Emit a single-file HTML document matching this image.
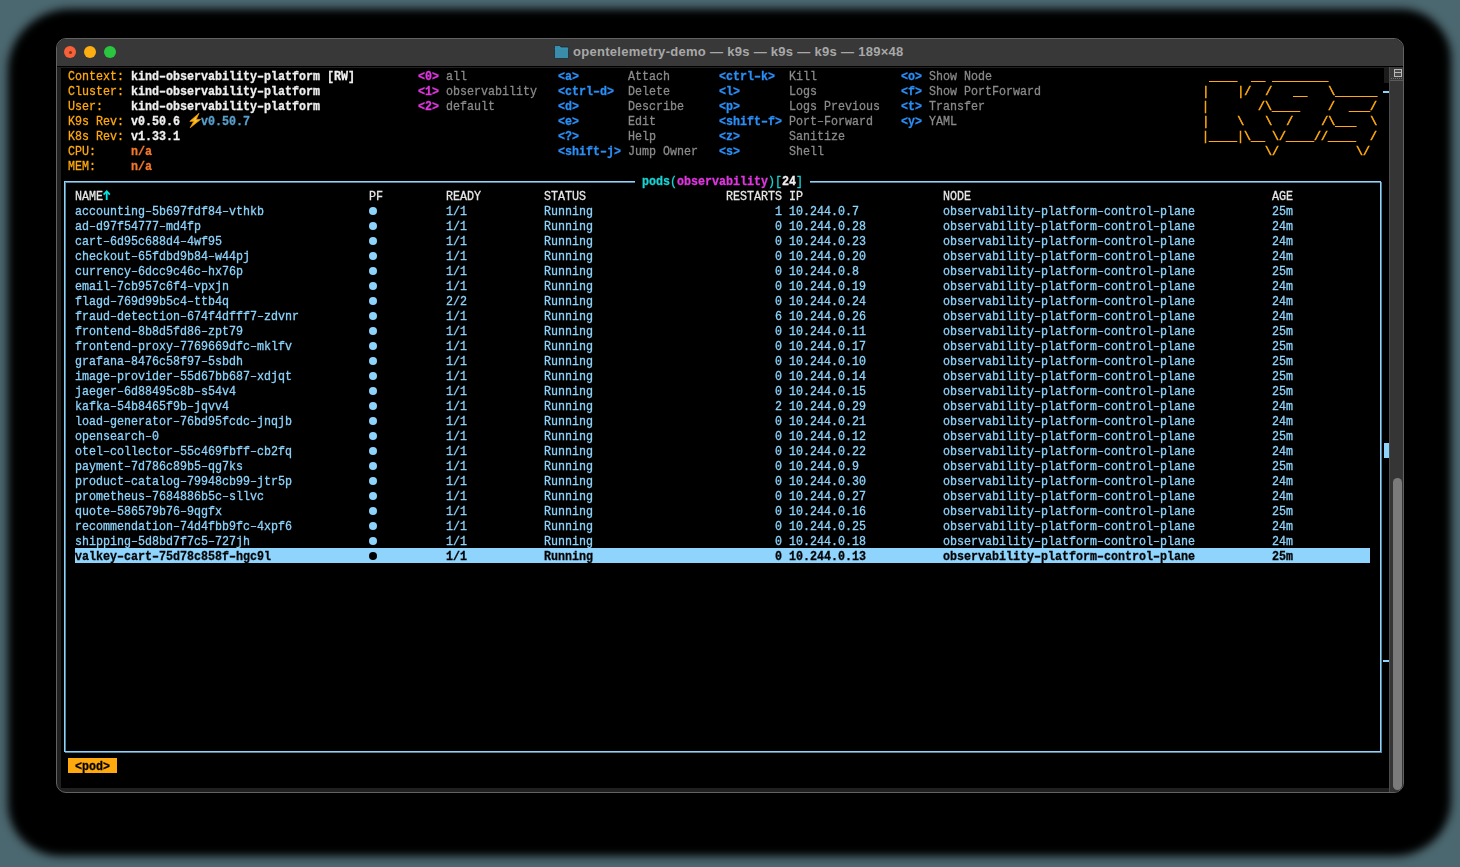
<!DOCTYPE html>
<html><head><meta charset="utf-8"><title>k9s</title>
<style>
html,body{margin:0;padding:0}
body{width:1460px;height:867px;overflow:hidden;background:#4b676f;position:relative}
#shadow{position:absolute;left:8px;top:9px;width:1443px;height:847px;background:#000;border-radius:62px 50px 56px 52px;filter:blur(4.5px)}
#win{position:absolute;left:56px;top:38px;width:1348px;height:755px;box-sizing:border-box;border:1px solid #626262;border-radius:10px;background:#202020;overflow:hidden}
#tb{position:absolute;left:0;top:0;width:1346px;height:27px;background:#383838;border-bottom:1px solid #000}
.tl{position:absolute;top:7px;width:12px;height:12px;border-radius:50%}
#ttl{position:absolute;left:516px;top:5px;font-family:"Liberation Sans",sans-serif;font-weight:bold;font-size:13px;letter-spacing:0.29px;line-height:16px;color:#a8a8a8;white-space:pre}
#term{position:absolute;left:4px;top:29px;width:1328px;height:720px;background:#000;overflow:hidden}
.r{position:absolute;left:0;top:0;height:15px;line-height:15px;white-space:pre;font-family:"Liberation Mono",monospace;font-size:13px;transform-origin:0 0;transform:scaleX(0.89729)}
.b{font-weight:bold}
.r span{-webkit-text-stroke:0.3px currentColor}
.r span.lg{-webkit-text-stroke:0.55px currentColor}
#sb{position:absolute;left:1332px;top:28px;width:14px;height:725px;background:#353535;border-left:1px solid #4c4c4c;box-sizing:border-box}
</style></head><body>
<div id="shadow"></div>
<div id="win">
<div id="tb">
 <div class="tl" style="left:7px;background:#f8603a"><div style="position:absolute;left:4.5px;top:4.5px;width:3px;height:3px;border-radius:50%;background:#7a3a10"></div></div>
 <div class="tl" style="left:27px;background:#fdae12"></div>
 <div class="tl" style="left:47px;background:#2ac63f"></div>
 <svg style="position:absolute;left:497px;top:6px" width="15" height="14" viewBox="0 0 15 14"><path d="M0.5 1.5 Q0.5 0.5 1.5 0.5 L5.5 0.5 L7 2 L13.5 2 Q14.5 2 14.5 3 L14.5 12.5 Q14.5 13.5 13.5 13.5 L1.5 13.5 Q0.5 13.5 0.5 12.5 Z" fill="#3b8cab" stroke="#1a1a1a" stroke-width="0.6"/><rect x="0.8" y="3.2" width="13.4" height="1" fill="#2f98b2"/></svg>
 <div id="ttl">opentelemetry-demo — k9s — k9s — k9s — 189×48</div>
</div>
<div id="term">

<div style="position:absolute;left:14px;top:480px;width:1295px;height:15px;background:#8ed4fc"></div>
<div style="position:absolute;left:7px;top:690px;width:49px;height:15px;background:#ffa90f"></div>
<div style="position:absolute;left:4px;top:114px;width:1317px;height:571px;border:1px solid #8dd3fb;opacity:0.6;box-sizing:border-box"></div>
<div style="position:absolute;left:3px;top:113px;width:1317px;height:571px;border:1px solid #8dd3fb;box-sizing:border-box"></div>
<div style="position:absolute;left:574px;top:110px;width:175px;height:8px;background:#000"></div>
<div class="r" style="top:1px"> <span style="color:#ffa90f">Context:</span> <span class="b" style="color:#f0f0f0">kind–observability–platform [RW]</span>         <span class="b" style="color:#e136e1">&lt;0&gt;</span> <span style="color:#8a8a8a">all</span>             <span class="b" style="color:#2a8ff7">&lt;a&gt;</span>       <span style="color:#8a8a8a">Attach</span>       <span class="b" style="color:#2a8ff7">&lt;ctrl–k&gt;</span>  <span style="color:#8a8a8a">Kill</span>            <span class="b" style="color:#2a8ff7">&lt;o&gt;</span> <span style="color:#8a8a8a">Show Node</span>                              <span class="lg" style="color:#ffa90f"> ____  __ ________       </span></div>
<div class="r" style="top:16px"> <span style="color:#ffa90f">Cluster:</span> <span class="b" style="color:#f0f0f0">kind–observability–platform</span>              <span class="b" style="color:#e136e1">&lt;1&gt;</span> <span style="color:#8a8a8a">observability</span>   <span class="b" style="color:#2a8ff7">&lt;ctrl–d&gt;</span>  <span style="color:#8a8a8a">Delete</span>       <span class="b" style="color:#2a8ff7">&lt;l&gt;</span>       <span style="color:#8a8a8a">Logs</span>            <span class="b" style="color:#2a8ff7">&lt;f&gt;</span> <span style="color:#8a8a8a">Show PortForward</span>                       <span class="lg" style="color:#ffa90f">|    |/  /   __   \______</span></div>
<div class="r" style="top:31px"> <span style="color:#ffa90f">User:</span>    <span class="b" style="color:#f0f0f0">kind–observability–platform</span>              <span class="b" style="color:#e136e1">&lt;2&gt;</span> <span style="color:#8a8a8a">default</span>         <span class="b" style="color:#2a8ff7">&lt;d&gt;</span>       <span style="color:#8a8a8a">Describe</span>     <span class="b" style="color:#2a8ff7">&lt;p&gt;</span>       <span style="color:#8a8a8a">Logs Previous</span>   <span class="b" style="color:#2a8ff7">&lt;t&gt;</span> <span style="color:#8a8a8a">Transfer</span>                               <span class="lg" style="color:#ffa90f">|       /\____    /  ___/</span></div>
<div class="r" style="top:46px"> <span style="color:#ffa90f">K9s Rev:</span> <span class="b" style="color:#f0f0f0">v0.50.6</span>   <span class="b" style="color:#58a0cc">v0.50.7</span>                                            <span class="b" style="color:#2a8ff7">&lt;e&gt;</span>       <span style="color:#8a8a8a">Edit</span>         <span class="b" style="color:#2a8ff7">&lt;shift–f&gt;</span> <span style="color:#8a8a8a">Port–Forward</span>    <span class="b" style="color:#2a8ff7">&lt;y&gt;</span> <span style="color:#8a8a8a">YAML</span>                                   <span class="lg" style="color:#ffa90f">|    \   \  /    /\___  \</span></div>
<div class="r" style="top:61px"> <span style="color:#ffa90f">K8s Rev:</span> <span class="b" style="color:#f0f0f0">v1.33.1</span>                                                      <span class="b" style="color:#2a8ff7">&lt;?&gt;</span>       <span style="color:#8a8a8a">Help</span>         <span class="b" style="color:#2a8ff7">&lt;z&gt;</span>       <span style="color:#8a8a8a">Sanitize</span>                                                   <span class="lg" style="color:#ffa90f">|____|\__ \/____//____  /</span></div>
<div class="r" style="top:76px"> <span style="color:#ffa90f">CPU:</span>     <span class="b" style="color:#f6782a">n/a</span>                                                          <span class="b" style="color:#2a8ff7">&lt;shift–j&gt;</span> <span style="color:#8a8a8a">Jump Owner</span>   <span class="b" style="color:#2a8ff7">&lt;s&gt;</span>       <span style="color:#8a8a8a">Shell</span>                                                      <span class="lg" style="color:#ffa90f">         \/           \/ </span></div>
<div class="r" style="top:91px"> <span style="color:#ffa90f">MEM:</span>     <span class="b" style="color:#f6782a">n/a</span></div>
<div class="r" style="top:106px">                                                                                   <span class="b" style="color:#19d3d3">pods</span><span style="color:#19d3d3">(</span><span class="b" style="color:#e136e1">observability</span><span style="color:#19d3d3">)</span><span style="color:#19d3d3">[</span><span class="b" style="color:#f0f0f0">24</span><span style="color:#19d3d3">]</span></div>
<div class="r" style="top:121px">  <span style="color:#e6e6e6">NAME</span>                                      <span style="color:#e6e6e6">PF</span>         <span style="color:#e6e6e6">READY</span>         <span style="color:#e6e6e6">STATUS</span>                    <span style="color:#e6e6e6">RESTARTS</span> <span style="color:#e6e6e6">IP</span>                    <span style="color:#e6e6e6">NODE</span>                                           <span style="color:#e6e6e6">AGE</span></div>
<div class="r" style="top:136px">  <span style="color:#8dd3fb">accounting–5b697fdf84–vthkb</span>                          <span style="color:#8dd3fb">1/1</span>           <span style="color:#8dd3fb">Running</span>                          <span style="color:#8dd3fb">1</span> <span style="color:#8dd3fb">10.244.0.7</span>            <span style="color:#8dd3fb">observability–platform–control–plane</span>           <span style="color:#8dd3fb">25m</span></div>
<div class="r" style="top:151px">  <span style="color:#8dd3fb">ad–d97f54777–md4fp</span>                                   <span style="color:#8dd3fb">1/1</span>           <span style="color:#8dd3fb">Running</span>                          <span style="color:#8dd3fb">0</span> <span style="color:#8dd3fb">10.244.0.28</span>           <span style="color:#8dd3fb">observability–platform–control–plane</span>           <span style="color:#8dd3fb">24m</span></div>
<div class="r" style="top:166px">  <span style="color:#8dd3fb">cart–6d95c688d4–4wf95</span>                                <span style="color:#8dd3fb">1/1</span>           <span style="color:#8dd3fb">Running</span>                          <span style="color:#8dd3fb">0</span> <span style="color:#8dd3fb">10.244.0.23</span>           <span style="color:#8dd3fb">observability–platform–control–plane</span>           <span style="color:#8dd3fb">24m</span></div>
<div class="r" style="top:181px">  <span style="color:#8dd3fb">checkout–65fdbd9b84–w44pj</span>                            <span style="color:#8dd3fb">1/1</span>           <span style="color:#8dd3fb">Running</span>                          <span style="color:#8dd3fb">0</span> <span style="color:#8dd3fb">10.244.0.20</span>           <span style="color:#8dd3fb">observability–platform–control–plane</span>           <span style="color:#8dd3fb">24m</span></div>
<div class="r" style="top:196px">  <span style="color:#8dd3fb">currency–6dcc9c46c–hx76p</span>                             <span style="color:#8dd3fb">1/1</span>           <span style="color:#8dd3fb">Running</span>                          <span style="color:#8dd3fb">0</span> <span style="color:#8dd3fb">10.244.0.8</span>            <span style="color:#8dd3fb">observability–platform–control–plane</span>           <span style="color:#8dd3fb">25m</span></div>
<div class="r" style="top:211px">  <span style="color:#8dd3fb">email–7cb957c6f4–vpxjn</span>                               <span style="color:#8dd3fb">1/1</span>           <span style="color:#8dd3fb">Running</span>                          <span style="color:#8dd3fb">0</span> <span style="color:#8dd3fb">10.244.0.19</span>           <span style="color:#8dd3fb">observability–platform–control–plane</span>           <span style="color:#8dd3fb">24m</span></div>
<div class="r" style="top:226px">  <span style="color:#8dd3fb">flagd–769d99b5c4–ttb4q</span>                               <span style="color:#8dd3fb">2/2</span>           <span style="color:#8dd3fb">Running</span>                          <span style="color:#8dd3fb">0</span> <span style="color:#8dd3fb">10.244.0.24</span>           <span style="color:#8dd3fb">observability–platform–control–plane</span>           <span style="color:#8dd3fb">24m</span></div>
<div class="r" style="top:241px">  <span style="color:#8dd3fb">fraud–detection–674f4dfff7–zdvnr</span>                     <span style="color:#8dd3fb">1/1</span>           <span style="color:#8dd3fb">Running</span>                          <span style="color:#8dd3fb">6</span> <span style="color:#8dd3fb">10.244.0.26</span>           <span style="color:#8dd3fb">observability–platform–control–plane</span>           <span style="color:#8dd3fb">24m</span></div>
<div class="r" style="top:256px">  <span style="color:#8dd3fb">frontend–8b8d5fd86–zpt79</span>                             <span style="color:#8dd3fb">1/1</span>           <span style="color:#8dd3fb">Running</span>                          <span style="color:#8dd3fb">0</span> <span style="color:#8dd3fb">10.244.0.11</span>           <span style="color:#8dd3fb">observability–platform–control–plane</span>           <span style="color:#8dd3fb">25m</span></div>
<div class="r" style="top:271px">  <span style="color:#8dd3fb">frontend–proxy–7769669dfc–mklfv</span>                      <span style="color:#8dd3fb">1/1</span>           <span style="color:#8dd3fb">Running</span>                          <span style="color:#8dd3fb">0</span> <span style="color:#8dd3fb">10.244.0.17</span>           <span style="color:#8dd3fb">observability–platform–control–plane</span>           <span style="color:#8dd3fb">25m</span></div>
<div class="r" style="top:286px">  <span style="color:#8dd3fb">grafana–8476c58f97–5sbdh</span>                             <span style="color:#8dd3fb">1/1</span>           <span style="color:#8dd3fb">Running</span>                          <span style="color:#8dd3fb">0</span> <span style="color:#8dd3fb">10.244.0.10</span>           <span style="color:#8dd3fb">observability–platform–control–plane</span>           <span style="color:#8dd3fb">25m</span></div>
<div class="r" style="top:301px">  <span style="color:#8dd3fb">image–provider–55d67bb687–xdjqt</span>                      <span style="color:#8dd3fb">1/1</span>           <span style="color:#8dd3fb">Running</span>                          <span style="color:#8dd3fb">0</span> <span style="color:#8dd3fb">10.244.0.14</span>           <span style="color:#8dd3fb">observability–platform–control–plane</span>           <span style="color:#8dd3fb">25m</span></div>
<div class="r" style="top:316px">  <span style="color:#8dd3fb">jaeger–6d88495c8b–s54v4</span>                              <span style="color:#8dd3fb">1/1</span>           <span style="color:#8dd3fb">Running</span>                          <span style="color:#8dd3fb">0</span> <span style="color:#8dd3fb">10.244.0.15</span>           <span style="color:#8dd3fb">observability–platform–control–plane</span>           <span style="color:#8dd3fb">25m</span></div>
<div class="r" style="top:331px">  <span style="color:#8dd3fb">kafka–54b8465f9b–jqvv4</span>                               <span style="color:#8dd3fb">1/1</span>           <span style="color:#8dd3fb">Running</span>                          <span style="color:#8dd3fb">2</span> <span style="color:#8dd3fb">10.244.0.29</span>           <span style="color:#8dd3fb">observability–platform–control–plane</span>           <span style="color:#8dd3fb">24m</span></div>
<div class="r" style="top:346px">  <span style="color:#8dd3fb">load–generator–76bd95fcdc–jnqjb</span>                      <span style="color:#8dd3fb">1/1</span>           <span style="color:#8dd3fb">Running</span>                          <span style="color:#8dd3fb">0</span> <span style="color:#8dd3fb">10.244.0.21</span>           <span style="color:#8dd3fb">observability–platform–control–plane</span>           <span style="color:#8dd3fb">24m</span></div>
<div class="r" style="top:361px">  <span style="color:#8dd3fb">opensearch–0</span>                                         <span style="color:#8dd3fb">1/1</span>           <span style="color:#8dd3fb">Running</span>                          <span style="color:#8dd3fb">0</span> <span style="color:#8dd3fb">10.244.0.12</span>           <span style="color:#8dd3fb">observability–platform–control–plane</span>           <span style="color:#8dd3fb">25m</span></div>
<div class="r" style="top:376px">  <span style="color:#8dd3fb">otel–collector–55c469fbff–cb2fq</span>                      <span style="color:#8dd3fb">1/1</span>           <span style="color:#8dd3fb">Running</span>                          <span style="color:#8dd3fb">0</span> <span style="color:#8dd3fb">10.244.0.22</span>           <span style="color:#8dd3fb">observability–platform–control–plane</span>           <span style="color:#8dd3fb">24m</span></div>
<div class="r" style="top:391px">  <span style="color:#8dd3fb">payment–7d786c89b5–qg7ks</span>                             <span style="color:#8dd3fb">1/1</span>           <span style="color:#8dd3fb">Running</span>                          <span style="color:#8dd3fb">0</span> <span style="color:#8dd3fb">10.244.0.9</span>            <span style="color:#8dd3fb">observability–platform–control–plane</span>           <span style="color:#8dd3fb">25m</span></div>
<div class="r" style="top:406px">  <span style="color:#8dd3fb">product–catalog–79948cb99–jtr5p</span>                      <span style="color:#8dd3fb">1/1</span>           <span style="color:#8dd3fb">Running</span>                          <span style="color:#8dd3fb">0</span> <span style="color:#8dd3fb">10.244.0.30</span>           <span style="color:#8dd3fb">observability–platform–control–plane</span>           <span style="color:#8dd3fb">24m</span></div>
<div class="r" style="top:421px">  <span style="color:#8dd3fb">prometheus–7684886b5c–sllvc</span>                          <span style="color:#8dd3fb">1/1</span>           <span style="color:#8dd3fb">Running</span>                          <span style="color:#8dd3fb">0</span> <span style="color:#8dd3fb">10.244.0.27</span>           <span style="color:#8dd3fb">observability–platform–control–plane</span>           <span style="color:#8dd3fb">24m</span></div>
<div class="r" style="top:436px">  <span style="color:#8dd3fb">quote–586579b76–9qgfx</span>                                <span style="color:#8dd3fb">1/1</span>           <span style="color:#8dd3fb">Running</span>                          <span style="color:#8dd3fb">0</span> <span style="color:#8dd3fb">10.244.0.16</span>           <span style="color:#8dd3fb">observability–platform–control–plane</span>           <span style="color:#8dd3fb">25m</span></div>
<div class="r" style="top:451px">  <span style="color:#8dd3fb">recommendation–74d4fbb9fc–4xpf6</span>                      <span style="color:#8dd3fb">1/1</span>           <span style="color:#8dd3fb">Running</span>                          <span style="color:#8dd3fb">0</span> <span style="color:#8dd3fb">10.244.0.25</span>           <span style="color:#8dd3fb">observability–platform–control–plane</span>           <span style="color:#8dd3fb">24m</span></div>
<div class="r" style="top:466px">  <span style="color:#8dd3fb">shipping–5d8bd7f7c5–727jh</span>                            <span style="color:#8dd3fb">1/1</span>           <span style="color:#8dd3fb">Running</span>                          <span style="color:#8dd3fb">0</span> <span style="color:#8dd3fb">10.244.0.18</span>           <span style="color:#8dd3fb">observability–platform–control–plane</span>           <span style="color:#8dd3fb">24m</span></div>
<div class="r" style="top:481px">  <span class="b" style="color:#000">valkey–cart–75d78c858f–hgc9l</span>                         <span class="b" style="color:#000">1/1</span>           <span class="b" style="color:#000">Running</span>                          <span class="b" style="color:#000">0</span> <span class="b" style="color:#000">10.244.0.13</span>           <span class="b" style="color:#000">observability–platform–control–plane</span>           <span class="b" style="color:#000">25m</span></div>
<div class="r" style="top:691px">  <span class="b" style="color:#000">&lt;pod&gt;</span></div>
<div style="position:absolute;left:308px;top:138.5px;width:8px;height:8px;border-radius:50%;background:#8dd3fb"></div>
<div style="position:absolute;left:308px;top:153.5px;width:8px;height:8px;border-radius:50%;background:#8dd3fb"></div>
<div style="position:absolute;left:308px;top:168.5px;width:8px;height:8px;border-radius:50%;background:#8dd3fb"></div>
<div style="position:absolute;left:308px;top:183.5px;width:8px;height:8px;border-radius:50%;background:#8dd3fb"></div>
<div style="position:absolute;left:308px;top:198.5px;width:8px;height:8px;border-radius:50%;background:#8dd3fb"></div>
<div style="position:absolute;left:308px;top:213.5px;width:8px;height:8px;border-radius:50%;background:#8dd3fb"></div>
<div style="position:absolute;left:308px;top:228.5px;width:8px;height:8px;border-radius:50%;background:#8dd3fb"></div>
<div style="position:absolute;left:308px;top:243.5px;width:8px;height:8px;border-radius:50%;background:#8dd3fb"></div>
<div style="position:absolute;left:308px;top:258.5px;width:8px;height:8px;border-radius:50%;background:#8dd3fb"></div>
<div style="position:absolute;left:308px;top:273.5px;width:8px;height:8px;border-radius:50%;background:#8dd3fb"></div>
<div style="position:absolute;left:308px;top:288.5px;width:8px;height:8px;border-radius:50%;background:#8dd3fb"></div>
<div style="position:absolute;left:308px;top:303.5px;width:8px;height:8px;border-radius:50%;background:#8dd3fb"></div>
<div style="position:absolute;left:308px;top:318.5px;width:8px;height:8px;border-radius:50%;background:#8dd3fb"></div>
<div style="position:absolute;left:308px;top:333.5px;width:8px;height:8px;border-radius:50%;background:#8dd3fb"></div>
<div style="position:absolute;left:308px;top:348.5px;width:8px;height:8px;border-radius:50%;background:#8dd3fb"></div>
<div style="position:absolute;left:308px;top:363.5px;width:8px;height:8px;border-radius:50%;background:#8dd3fb"></div>
<div style="position:absolute;left:308px;top:378.5px;width:8px;height:8px;border-radius:50%;background:#8dd3fb"></div>
<div style="position:absolute;left:308px;top:393.5px;width:8px;height:8px;border-radius:50%;background:#8dd3fb"></div>
<div style="position:absolute;left:308px;top:408.5px;width:8px;height:8px;border-radius:50%;background:#8dd3fb"></div>
<div style="position:absolute;left:308px;top:423.5px;width:8px;height:8px;border-radius:50%;background:#8dd3fb"></div>
<div style="position:absolute;left:308px;top:438.5px;width:8px;height:8px;border-radius:50%;background:#8dd3fb"></div>
<div style="position:absolute;left:308px;top:453.5px;width:8px;height:8px;border-radius:50%;background:#8dd3fb"></div>
<div style="position:absolute;left:308px;top:468.5px;width:8px;height:8px;border-radius:50%;background:#8dd3fb"></div>
<div style="position:absolute;left:308px;top:483.5px;width:8px;height:8px;border-radius:50%;background:#000"></div>
<svg style="position:absolute;left:128px;top:45px" width="12" height="15" viewBox="0 0 12 15"><path d="M10 0.3 L0.8 8.3 L4.8 8.3 L1.2 14.7 L11.6 6.4 L7.2 6.4 Z" fill="#fdb70f" stroke="#ef9a0a" stroke-width="0.8" stroke-linejoin="round"/><path d="M5.6 6.2 L6.8 5.6 M6.4 8.4 L7.4 7.8" stroke="#dfe6f0" stroke-width="0.9"/></svg>
<svg style="position:absolute;left:42px;top:122px" width="9" height="11" viewBox="0 0 9 11"><path d="M3.7 1.6 L3.7 10" stroke="#00e6e6" stroke-width="1.8"/><path d="M0.6 4.6 L3.7 1.3 L6.8 4.6" fill="none" stroke="#00e6e6" stroke-width="1.7"/></svg>
<div style="position:absolute;left:1323px;top:0;width:5px;height:15px;background:#1c1c1c"></div>
<div style="position:absolute;left:1322px;top:23px;width:6px;height:2px;background:#8dd3fb"></div>
<div style="position:absolute;left:1323px;top:375px;width:5px;height:15px;background:#8dd3fb"></div>
<div style="position:absolute;left:1322px;top:592px;width:6px;height:2px;background:#8dd3fb"></div>
</div>
<div id="sb"><div style="position:absolute;left:3px;top:411px;width:9px;height:312px;border-radius:4.5px;background:#7b7b7b"></div><div style="position:absolute;left:0;top:0;width:13px;height:13px;background:#3a3a3a;border-bottom:1px solid #5a5a5a"></div><div style="position:absolute;left:3.5px;top:1.5px;width:6px;height:6.5px;border:1px solid #b8b8b8;background:#4a4a4a"></div><div style="position:absolute;left:3.5px;top:5px;width:8px;height:1px;background:#b8b8b8"></div><div style="position:absolute;left:1px;top:11px;width:12px;height:1px;background:repeating-linear-gradient(90deg,#707070 0 1px,transparent 1px 2px)"></div></div>
</div>
</body></html>
